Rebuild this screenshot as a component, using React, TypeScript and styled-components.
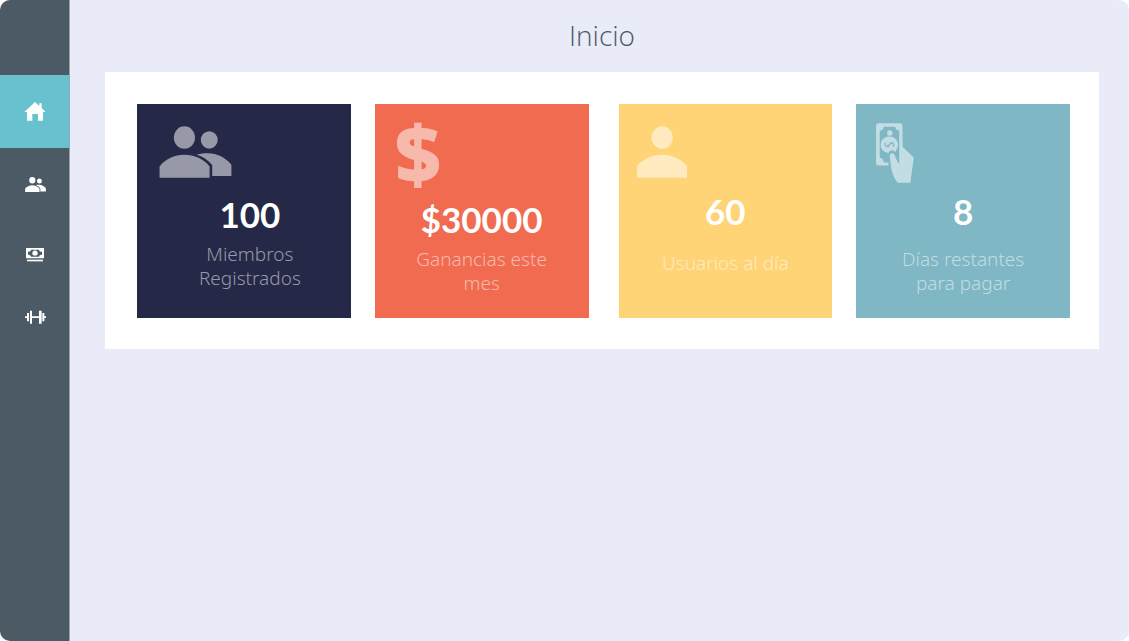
import React from "react";
import styled, { createGlobalStyle } from "styled-components";

const GlobalStyle = createGlobalStyle`
  *, *::before, *::after { box-sizing: border-box; }
  body {
    margin: 0;
    background: #ffffff;
    font-family: "Noto Sans", "Open Sans", sans-serif;
  }
`;

const Shell = styled.div`
  display: flex;
  min-height: 100vh;
  overflow: hidden;
  border-radius: 10px;
  background: #e9ebf8;
`;

const Sidebar = styled.nav`
  display: flex;
  flex-direction: column;
  flex: none;
  width: 70px;
  padding-top: 75px;
  background: #4b5a64;
  border-right: 1px solid #9ba3b0;
`;

const NavLink = styled.a<{ $height: number; $active?: boolean }>`
  display: flex;
  align-items: center;
  justify-content: center;
  height: ${(p) => p.$height}px;
  padding-left: 1px;
  color: #ffffff;
  background: ${(p) => (p.$active ? "#67c1cf" : "transparent")};
`;

const Main = styled.main`
  flex: 1;
  min-width: 0;
  padding: 15px 30px 32px 35px;
`;

const Title = styled.h1`
  margin: 0 0 17px;
  color: #4b5a64;
  font-family: "Open Sans", sans-serif;
  font-size: 28px;
  font-weight: 300;
  line-height: 40px;
  text-align: center;
`;

const Panel = styled.section`
  display: flex;
  flex-wrap: wrap;
  gap: 30px;
  padding: 32px 29px 31px 32px;
  background: #ffffff;
`;

const CardPair = styled.div`
  display: flex;
  flex: 1;
  gap: 24px;
`;

const Card = styled.article<{ $color: string }>`
  flex: 1;
  min-height: 214px;
  background: ${(p) => p.$color};
  color: #ffffff;
  text-align: center;
`;

const CardHead = styled.div<{ $height: number; $top: number; $left: number }>`
  display: flex;
  align-items: flex-start;
  height: ${(p) => p.$height}px;
  padding: ${(p) => p.$top}px 0 0 ${(p) => p.$left}px;
  color: rgba(255, 255, 255, 0.53);
`;

const Currency = styled.span`
  font-family: "Open Sans", sans-serif;
  font-size: 80px;
  font-weight: 800;
  line-height: 68px;
`;

const CardBody = styled.div<{ $indent?: number }>`
  padding-left: ${(p) => p.$indent ?? 0}px;
`;

const Figure = styled.p`
  margin: 0;
  font-family: Lato, "Open Sans", sans-serif;
  font-size: 35px;
  font-weight: 700;
  line-height: 40px;
`;

const Label = styled.p<{ $gap: number }>`
  max-width: 140px;
  margin: ${(p) => p.$gap}px auto 0;
  color: rgba(255, 255, 255, 0.53);
  font-size: 19px;
  font-weight: 300;
  line-height: 24px;
`;

const HomeIcon = () => (
  <svg width="22" height="19" viewBox="0 0 66 57" fill="currentColor" aria-hidden="true">
    <path d="M33 0 46 12V4H53V18L65 30H57V56H42V36H25V56H9V30H1Z" />
  </svg>
);

const PeopleIcon = ({ width, height }: { width: number; height: number }) => (
  <svg width={width} height={height} viewBox="87 92 219 157" fill="currentColor" aria-hidden="true">
    <ellipse cx="163" cy="127" rx="32" ry="34" />
    <ellipse cx="238" cy="134" rx="25.5" ry="26.5" />
    <path d="M88 248V214C105 192 134 179 163 179S222 192 239 214V248Z" />
    <path d="M200 179C212 175 224 174 234 174C261 174 288 187 305 209V243H247V210C234 194 218 184 200 179Z" />
  </svg>
);

const PersonIcon = () => (
  <svg width="50" height="52" viewBox="78 92 151 157" fill="currentColor" aria-hidden="true">
    <ellipse cx="154" cy="127" rx="32" ry="34" />
    <path d="M78 248V213C96 192 125 179 154 179S211 192 229 213V248Z" />
  </svg>
);

const CashIcon = () => (
  <svg width="18" height="14" viewBox="0 0 54 42" fill="currentColor" aria-hidden="true">
    <path
      fillRule="evenodd"
      d="M0 0H54V31H0ZM15 5C15 9 11 11 6 11V20C11 20 15 22 15 26H39C39 22 43 20 48 20V11C43 11 39 9 39 5Z"
    />
    <circle cx="27" cy="15.5" r="8" />
    <path d="M3 35H51V40H3Z" />
  </svg>
);

const DumbbellIcon = () => (
  <svg width="21" height="14" viewBox="0 0 63 42" fill="currentColor" aria-hidden="true">
    <path d="M0 19H6V9H12V34H6V24H0ZM15 2H21V19H42V2H50V41H42V24H21V41H15ZM52 9H58V19H63V24H58V34H52Z" />
  </svg>
);

const PayIcon = () => (
  <svg width="38" height="60" viewBox="80 83 113 179" fill="currentColor" aria-hidden="true">
    <path d="M88 84H151Q159 84 159 92V154L190 184Q193 187 192 192L182 261H145C131 247 124 226 121 181C121 172 131 171 135 178L141 192Q144 199 149 206V105Q139 105 137 94H103Q102 105 91 106V187Q102 188 103 201H117V210H88Q80 210 80 202V92Q80 84 88 84Z" />
    <circle cx="121" cy="113" r="8" />
    <path d="M120 123A25 25 0 0 1 141 162L138 170Q130 160 119 168L117 173A25 25 0 0 1 120 123Z" />
    <path
      d="M107 144C106 153 112 155 117 150L123 145C129 140 135 144 132 152"
      fill="none"
      stroke="#7fb7c5"
      strokeWidth="4"
      strokeLinecap="round"
    />
    <path d="M116 151L119 155M124 144L121 140" stroke="#7fb7c5" strokeWidth="3" />
  </svg>
);

export default function App() {
  return (
    <>
      <GlobalStyle />
      <Shell>
        <Sidebar aria-label="Principal">
          <NavLink href="#inicio" aria-label="Inicio" aria-current="page" $height={73} $active>
            <HomeIcon />
          </NavLink>
          <NavLink href="#miembros" aria-label="Miembros" $height={73}>
            <PeopleIcon width={21} height={15} />
          </NavLink>
          <NavLink href="#pagos" aria-label="Pagos" $height={68}>
            <CashIcon />
          </NavLink>
          <NavLink href="#gimnasio" aria-label="Gimnasio" $height={56}>
            <DumbbellIcon />
          </NavLink>
        </Sidebar>
        <Main>
          <Title>Inicio</Title>
          <Panel>
            <CardPair>
              <Card $color="#252847">
                <CardHead $height={90} $top={22} $left={22}>
                  <PeopleIcon width={73} height={52} />
                </CardHead>
                <CardBody $indent={12}>
                  <Figure>100</Figure>
                  <Label $gap={8}>Miembros Registrados</Label>
                </CardBody>
              </Card>
              <Card $color="#f16b51">
                <CardHead $height={95} $top={14} $left={20}>
                  <Currency aria-hidden="true">$</Currency>
                </CardHead>
                <CardBody>
                  <Figure>$30000</Figure>
                  <Label $gap={8}>Ganancias este mes</Label>
                </CardBody>
              </Card>
            </CardPair>
            <CardPair>
              <Card $color="#ffd477">
                <CardHead $height={87} $top={22} $left={18}>
                  <PersonIcon />
                </CardHead>
                <CardBody>
                  <Figure>60</Figure>
                  <Label $gap={20}>Usuarios al día</Label>
                </CardBody>
              </Card>
              <Card $color="#7fb7c5">
                <CardHead $height={87} $top={19} $left={20}>
                  <PayIcon />
                </CardHead>
                <CardBody>
                  <Figure>8</Figure>
                  <Label $gap={16}>Días restantes para pagar</Label>
                </CardBody>
              </Card>
            </CardPair>
          </Panel>
        </Main>
      </Shell>
    </>
  );
}
